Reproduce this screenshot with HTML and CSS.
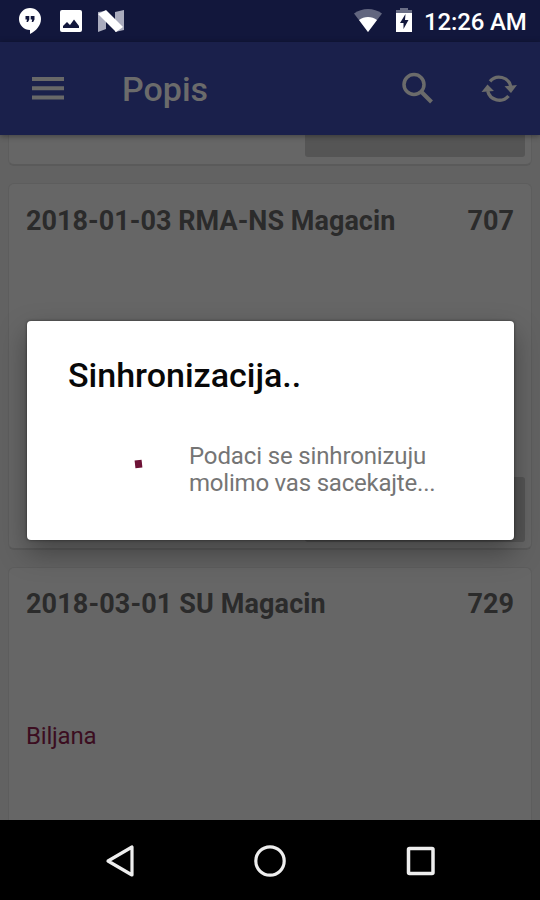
FILE: index.html
```html
<!DOCTYPE html>
<html lang="sr-Latn">
<head>
<meta charset="utf-8">
<title>Popis</title>
<link rel="stylesheet" href="styles.css">
</head>
<body>
<div class="phone">
  <header class="status">
    <svg class="s-chat" width="24" height="28" viewBox="0 0 24 28"><path fill="#fff" d="M12 1a11 11 0 0 0 0 22v4c6-3 11-8.500 11-15A11 11 0 0 0 12 1z"/><path fill="#12173c" d="M7.500 9h3.800v3.500L10 15H8.500l.5-2.500H7.500zM12.700 9h3.800v3.500L15.200 15h-1.500l.5-2.500h-1.500z"/></svg>
    <svg class="s-image" width="24" height="24" viewBox="0 0 24 24"><rect x="1" y="1" width="22" height="22" rx="2" fill="#fff"/><path fill="#12173c" d="M4 19v-2l4-4 3 3 4-5.500 5 6.500v2z"/></svg>
    <svg class="s-n" width="28" height="24" viewBox="0 0 28 24"><path fill="#a9abbd" d="M1 3l8-1v18l-8 3zM18 3l9-2v20l-9 2z"/><path fill="#fff" d="M1 5l8-4 17 17-7 5z"/></svg>
    <span class="grow"></span>
    <svg class="s-wifi" width="30" height="24" viewBox="0 0 30 24"><path fill="#62667f" d="M1 5.500C9-.500 21-.500 29 5.500L15 24z"/><path fill="#fff" d="M6 12c5-4 13-4 18 0l-9 12z"/></svg>
    <svg class="s-battery" width="18" height="26" viewBox="0 0 18 26"><path fill="#6b6f86" d="M5 1h8v2h4v4H1V3h4z"/><path fill="#fff" d="M1 6h16v19H1z"/><path fill="#12173c" d="M10.500 7L5 16h3.500v6L13.500 13H10z"/></svg>
    <span class="time">12:26 AM</span>
  </header>
  <nav class="bar">
    <svg class="menu" width="32" height="24" viewBox="0 0 32 24"><path fill="#686868" d="M0 0h32v4H0zM0 9.200h32v4H0zM0 18.400h32v4H0z"/></svg>
    <h1 class="title">Popis</h1>
    <svg class="search" width="32" height="32" viewBox="0 0 32 32" fill="none" stroke="#6b6b6b"><circle cx="13" cy="11.500" r="10" stroke-width="3.500"/><path stroke-width="4" d="M20 18.500L30.500 29"/></svg>
    <svg class="sync" width="36" height="30" viewBox="0 0 36 30"><path fill="none" stroke="#6b6b6b" stroke-width="3.300" d="M9 7.300A12 12 0 0 1 29.800 12.500M27.500 22A12 12 0 0 1 6.700 17"/><path fill="#6b6b6b" d="M23.500 12.300L36 11L30 19zM.500 18L13 17L6.500 10.500z"/></svg>
  </nav>
  <main class="list">
    <article class="card card-end"><div class="button"></div></article>
    <article class="card card-full">
      <div class="row"><h2 class="name">2018-01-03 RMA-NS Magacin</h2><span class="num">707</span></div>
      <div class="button"></div>
    </article>
    <article class="card card-start">
      <div class="row"><h2 class="name name-short">2018-03-01 SU Magacin</h2><span class="num">729</span></div>
      <p class="user">Biljana</p>
    </article>
  </main>
  <footer class="nav">
    <svg width="28" height="32" viewBox="0 0 28 32"><path fill="none" stroke="#eee" stroke-width="3.200" stroke-linejoin="round" d="M2 16L26 2v28z"/></svg>
    <svg width="32" height="32" viewBox="0 0 32 32"><circle cx="16" cy="16" r="14.200" fill="none" stroke="#eee" stroke-width="3.200"/></svg>
    <svg width="30" height="30" viewBox="0 0 30 30"><rect x="2.500" y="2.500" width="24.500" height="25" rx="1" fill="none" stroke="#eee" stroke-width="3.500"/></svg>
  </footer>
  <section class="dialog">
    <h2 class="dialog-title">Sinhronizacija..</h2>
    <div class="dialog-body">
      <span class="spinner"></span>
      <p class="message">Podaci se sinhronizuju<br><span class="line2">molimo vas sacekajte...</span></p>
    </div>
  </section>
</div>
</body>
</html>
```
FILE: styles.css
```css
* { box-sizing: border-box; }
body { margin: 0; font-family: Roboto, "Liberation Sans", sans-serif; background: #000; }
h1, h2, p { margin: 0; }
svg { display: block; flex: none; overflow: visible; }
.phone { position: relative; width: 540px; height: 900px; display: flex; flex-direction: column; overflow: hidden; }
.status { height: 42px; flex: none; display: flex; align-items: center; background: #12173c; padding: 0 14px 0 18px; }
.s-image { margin-left: 17px; }
.s-n { margin-left: 14px; }
.grow { flex: 1; }
.s-wifi, .s-battery { margin-bottom: 2px; }
.s-battery { margin-left: 12px; margin-right: 11px; }
.time { width: 102px; padding-top: 1px; font-size: 24px; font-weight: 500; line-height: 42px; letter-spacing: -0.15px; color: #fff; white-space: nowrap; }
.bar { height: 93px; flex: none; display: flex; align-items: center; background: #1a204b; padding: 0 23px 0 32px; position: relative; box-shadow: 0 1px 6px rgba(0,0,0,.4); }
.title { margin-left: 58px; flex: 1; color: #6b6b6b; font-size: 34px; font-weight: 500; line-height: 40px; }
.sync { margin-left: 48px; }
.list { flex: 1; min-height: 0; overflow: hidden; background: #626262; padding: 0 8px; display: flex; flex-direction: column; gap: 17px; }
.card { flex: none; background: #666; border: 1px solid #5d5d5d; border-bottom: 2px solid #5a5a5a; border-radius: 6px; padding: 0 17px; display: flex; flex-direction: column; }
.card-end { height: 31px; border-top: 0; border-radius: 0 0 6px 6px; }
.card-full { height: 367px; }
.card-start { height: 280px; }
.button { width: 220px; height: 65px; margin: auto -11px 6px auto; background: #555; border-radius: 3px; }
.card-end .button { height: 22px; margin-top: 0; border-radius: 0 0 3px 3px; }
.row { display: flex; justify-content: space-between; padding-top: 21px; font-size: 27px; line-height: 32px; font-weight: 700; color: #2b2b2b; white-space: nowrap; }
.card-start .row { padding-top: 20px; }
.name { font: inherit; letter-spacing: 0.03px; }
.name-short { letter-spacing: 0.12px; }
.user { margin-top: 102px; font-size: 24px; line-height: 28px; letter-spacing: -0.2px; color: #3b0d20; }
.nav { height: 80px; flex: none; background: #000; display: flex; align-items: center; justify-content: space-between; padding: 1px 104px 0 106px; }
.dialog { position: absolute; left: 27px; top: 321px; width: 487px; height: 219px; background: #fff; border-radius: 4px; padding: 34px 41px; box-shadow: 0 0 3px rgba(0,0,0,.5), 0 12px 28px rgba(0,0,0,.35); }
.dialog-title { font-size: 34px; line-height: 40px; font-weight: 500; color: #080808; white-space: nowrap; }
.dialog-body { display: flex; margin-top: 48px; }
.spinner { width: 7px; height: 8px; margin: 17px 47px 0 67px; background: #6d1236; transform: rotate(-6deg); flex: none; }
.message { font-size: 24px; line-height: 27px; letter-spacing: -0.14px; color: #757575; white-space: nowrap; }
.line2 { letter-spacing: -0.21px; }
```
